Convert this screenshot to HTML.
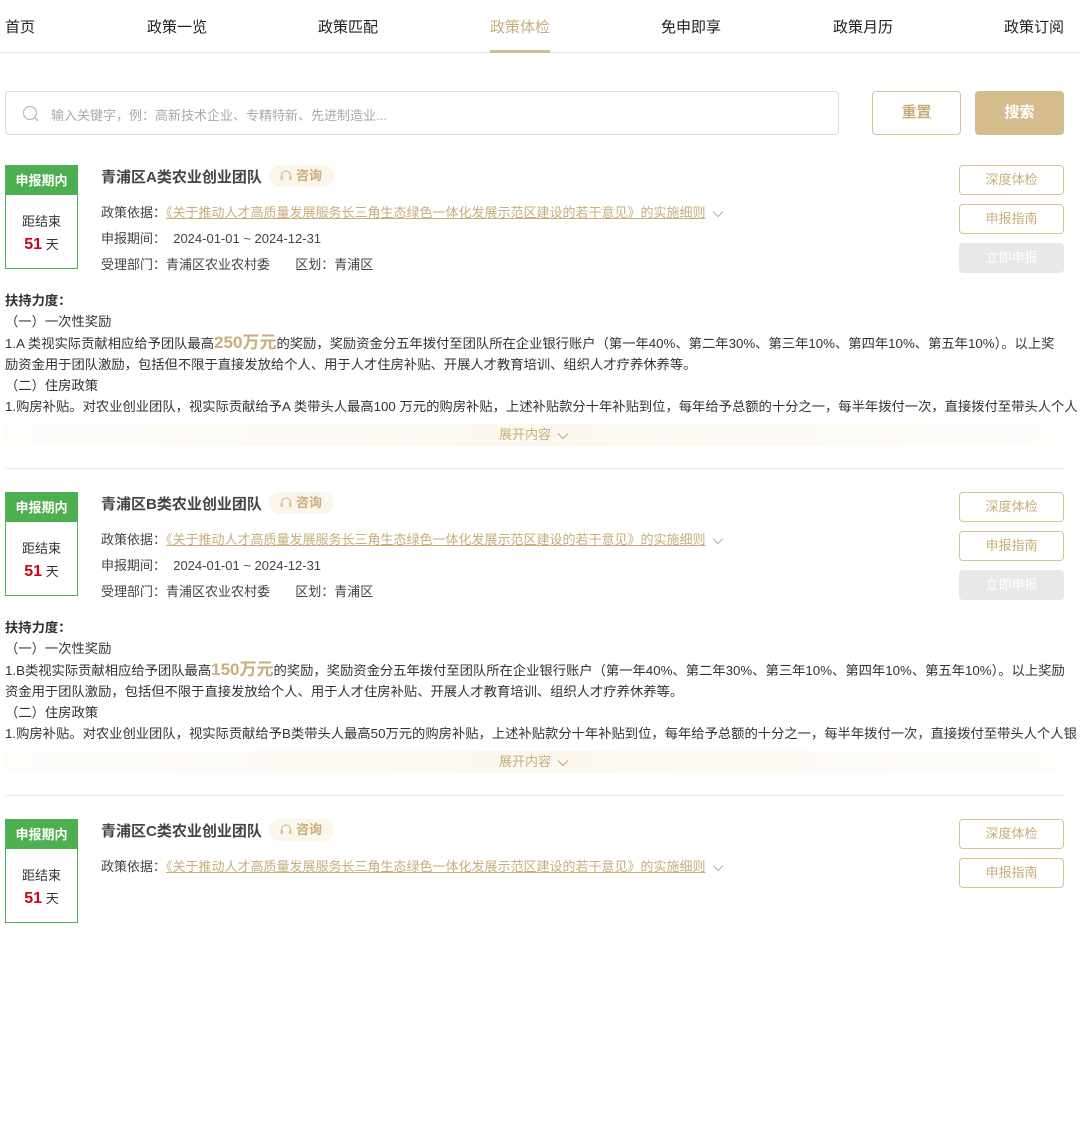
<!DOCTYPE html><html><head><meta charset="utf-8"><style>
*{margin:0;padding:0;box-sizing:border-box}
body{width:1080px;height:867px;overflow:hidden;background:#fff;font-family:"Liberation Sans","Noto Sans CJK SC",sans-serif;color:#333;position:relative}
.nav{position:absolute;top:0;left:0;width:1080px;height:53px;border-bottom:1px solid #e6e6e6}
.nav span{position:absolute;top:16px;font-size:15px;color:#222}
.nav .on{color:#c9ad7b}
.nav .bar{position:absolute;left:490px;top:50px;width:60px;height:3px;background:#d3bd92}
.search{position:absolute;left:5px;top:91px;width:834px;height:44px;border:1px solid #ddd;border-radius:4px}
.search .ph{position:absolute;left:45px;top:13px;font-size:13px;color:#aaa}
.btn{position:absolute;border-radius:4px;font-size:15px;font-weight:bold;text-align:center}
.card{position:absolute;left:0;width:1080px;height:327px}
.st{position:absolute;left:5px;top:0;width:73px;height:104px;border:1px solid #4caf50}
.st .h{background:#4caf50;color:#fff;font-weight:bold;font-size:13px;height:29px;line-height:29px;text-align:center}
.st .b{text-align:center;font-size:13px;color:#333;padding-top:15px;line-height:23px}
.st .b em{font-style:normal;color:#d0021b;font-weight:bold;font-size:16px}
.ttl{position:absolute;left:101px;top:1px;font-size:15px;font-weight:bold;color:#444}
.zx{position:absolute;left:269px;top:0;width:65px;height:22px;border-radius:11px;background:#fbf6ec;color:#c9ad7b;font-size:13px;font-weight:bold;line-height:22px;padding-left:27px}
.zx svg{position:absolute;left:10px;top:4px}
.row{position:absolute;left:101px;font-size:13px;color:#444;white-space:nowrap}
.row a{color:#c9ad7b;text-decoration:underline}
.chev{display:inline-block;vertical-align:middle;margin-left:6px}
.rb{position:absolute;left:959px;width:105px;height:30px;border:1px solid #d6c29c;border-radius:4px;color:#c9ad7b;font-size:13px;text-align:center;line-height:28px}
.rb.dis{background:#e8e8e8;border-color:#e8e8e8;color:#fff}
.sp{position:absolute;left:5px;width:1080px;font-size:13.3px;color:#333;white-space:nowrap;overflow:hidden;line-height:21px}
.sp b{color:#c9ad7b;font-size:17px}
.exp{position:absolute;left:5px;top:259px;width:1058px;height:22px;background:linear-gradient(90deg,rgba(252,248,240,.3),#fcf8ef 50%,rgba(252,248,240,.3));color:#c9ad7b;font-size:13px;text-align:center;line-height:22px}
.div{position:absolute;left:5px;top:303px;width:1058px;height:1px;background:#e8e8e8}
</style></head><body>
<div class="nav">
<span style="left:5px">首页</span><span style="left:147px">政策一览</span><span style="left:318px">政策匹配</span><span class="on" style="left:490px">政策体检</span><span style="left:661px">免申即享</span><span style="left:833px">政策月历</span><span style="left:1004px">政策订阅</span>
<div class="bar"></div></div>
<div class="search"><svg style="position:absolute;left:16px;top:13px" width="18" height="18" viewBox="0 0 18 18"><circle cx="8" cy="8" r="6.5" fill="none" stroke="#bbb" stroke-width="1.3"/><line x1="12.7" y1="12.7" x2="16" y2="16" stroke="#bbb" stroke-width="1.3"/></svg><span class="ph">输入关键字，例：高新技术企业、专精特新、先进制造业...</span></div>
<div class="btn" style="left:872px;top:91px;width:89px;height:44px;border:1px solid #d6c29c;color:#c9ad7b;line-height:42px">重置</div>
<div class="btn" style="left:975px;top:91px;width:89px;height:44px;background:#d4bc8c;color:#fff;line-height:44px">搜索</div>

<div class="card" style="top:165px">
<div class="st"><div class="h">申报期内</div><div class="b">距结束<br><em>51</em> 天</div></div>
<div class="ttl">青浦区A类农业创业团队</div>
<div class="zx"><svg width="14" height="14" viewBox="0 0 14 14"><path d="M2.5 8V6.5a4.5 4.5 0 0 1 9 0V8" fill="none" stroke="#d6c29c" stroke-width="1.3"/><rect x="1.5" y="7" width="2.5" height="4" rx="1" fill="#d6c29c"/><rect x="10" y="7" width="2.5" height="4" rx="1" fill="#d6c29c"/></svg>咨询</div>
<div class="row" style="top:37px">政策依据：<a>《关于推动人才高质量发展服务长三角生态绿色一体化发展示范区建设的若干意见》的实施细则</a><svg class="chev" width="12" height="8" viewBox="0 0 12 8"><path d="M1 1.5l5 5 5-5" fill="none" stroke="#bbb" stroke-width="1.2"/></svg></div>
<div class="row" style="top:63px">申报期间：&nbsp; 2024-01-01 ~ 2024-12-31</div>
<div class="row" style="top:89px">受理部门：青浦区农业农村委 &nbsp; &nbsp; &nbsp; 区划：青浦区</div>
<div class="rb" style="top:0">深度体检</div><div class="rb" style="top:39px">申报指南</div><div class="rb dis" style="top:78px">立即申报</div>
<div class="sp" style="top:125px"><strong>扶持力度：</strong><br>（一）一次性奖励<br>1.A 类视实际贡献相应给予团队最高<b>250万元</b>的奖励，奖励资金分五年拨付至团队所在企业银行账户（第一年40%、第二年30%、第三年10%、第四年10%、第五年10%）。以上奖<br>励资金用于团队激励，包括但不限于直接发放给个人、用于人才住房补贴、开展人才教育培训、组织人才疗养休养等。<br>（二）住房政策<br>1.购房补贴。对农业创业团队，视实际贡献给予A 类带头人最高100 万元的购房补贴，上述补贴款分十年补贴到位，每年给予总额的十分之一，每半年拨付一次，直接拨付至带头人个人</div>
<div class="exp">展开内容<svg class="chev" width="12" height="8" viewBox="0 0 12 8"><path d="M1 1.5l5 5 5-5" fill="none" stroke="#c9ad7b" stroke-width="1.2"/></svg></div><div class="div"></div>
</div>

<div class="card" style="top:492px">
<div class="st"><div class="h">申报期内</div><div class="b">距结束<br><em>51</em> 天</div></div>
<div class="ttl">青浦区B类农业创业团队</div>
<div class="zx"><svg width="14" height="14" viewBox="0 0 14 14"><path d="M2.5 8V6.5a4.5 4.5 0 0 1 9 0V8" fill="none" stroke="#d6c29c" stroke-width="1.3"/><rect x="1.5" y="7" width="2.5" height="4" rx="1" fill="#d6c29c"/><rect x="10" y="7" width="2.5" height="4" rx="1" fill="#d6c29c"/></svg>咨询</div>
<div class="row" style="top:37px">政策依据：<a>《关于推动人才高质量发展服务长三角生态绿色一体化发展示范区建设的若干意见》的实施细则</a><svg class="chev" width="12" height="8" viewBox="0 0 12 8"><path d="M1 1.5l5 5 5-5" fill="none" stroke="#bbb" stroke-width="1.2"/></svg></div>
<div class="row" style="top:63px">申报期间：&nbsp; 2024-01-01 ~ 2024-12-31</div>
<div class="row" style="top:89px">受理部门：青浦区农业农村委 &nbsp; &nbsp; &nbsp; 区划：青浦区</div>
<div class="rb" style="top:0">深度体检</div><div class="rb" style="top:39px">申报指南</div><div class="rb dis" style="top:78px">立即申报</div>
<div class="sp" style="top:125px;height:128px"><strong>扶持力度：</strong><br>（一）一次性奖励<br>1.B类视实际贡献相应给予团队最高<b>150万元</b>的奖励，奖励资金分五年拨付至团队所在企业银行账户（第一年40%、第二年30%、第三年10%、第四年10%、第五年10%）。以上奖励<br>资金用于团队激励，包括但不限于直接发放给个人、用于人才住房补贴、开展人才教育培训、组织人才疗养休养等。<br>（二）住房政策<br>1.购房补贴。对农业创业团队，视实际贡献给予B类带头人最高50万元的购房补贴，上述补贴款分十年补贴到位，每年给予总额的十分之一，每半年拨付一次，直接拨付至带头人个人银</div>
<div class="exp">展开内容<svg class="chev" width="12" height="8" viewBox="0 0 12 8"><path d="M1 1.5l5 5 5-5" fill="none" stroke="#c9ad7b" stroke-width="1.2"/></svg></div><div class="div"></div>
</div>

<div class="card" style="top:819px">
<div class="st"><div class="h">申报期内</div><div class="b">距结束<br><em>51</em> 天</div></div>
<div class="ttl">青浦区C类农业创业团队</div>
<div class="zx"><svg width="14" height="14" viewBox="0 0 14 14"><path d="M2.5 8V6.5a4.5 4.5 0 0 1 9 0V8" fill="none" stroke="#d6c29c" stroke-width="1.3"/><rect x="1.5" y="7" width="2.5" height="4" rx="1" fill="#d6c29c"/><rect x="10" y="7" width="2.5" height="4" rx="1" fill="#d6c29c"/></svg>咨询</div>
<div class="row" style="top:37px">政策依据：<a>《关于推动人才高质量发展服务长三角生态绿色一体化发展示范区建设的若干意见》的实施细则</a><svg class="chev" width="12" height="8" viewBox="0 0 12 8"><path d="M1 1.5l5 5 5-5" fill="none" stroke="#bbb" stroke-width="1.2"/></svg></div>
<div class="rb" style="top:0">深度体检</div><div class="rb" style="top:39px">申报指南</div>
</div>
</body></html>
